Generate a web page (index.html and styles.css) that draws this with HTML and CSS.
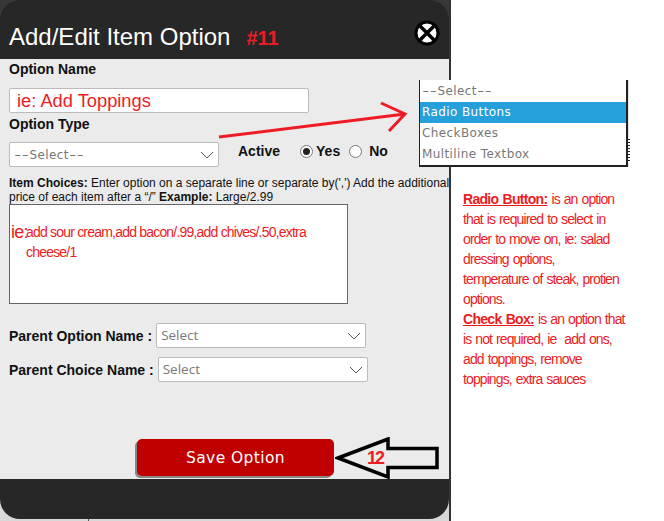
FILE: index.html
```html
<!DOCTYPE html>
<html>
<head>
  <title>Add/Edit Item Option</title>
  <link rel="stylesheet" href="styles.css">
</head>
<body>
  <div class="modal">
    <div class="modal-header">
      <h1>Add/Edit Item Option</h1>
      <span class="step-number">#11</span>
      <svg class="close-icon" width="28" height="28" viewBox="0 0 28 28">
        <circle cx="14" cy="14" r="11" fill="#fff" stroke="#000" stroke-width="3"/>
        <path d="M7 7L21 21M21 7L7 21" stroke="#000" stroke-width="3.5"/>
      </svg>
    </div>

    <div class="modal-body">
      <label class="field-label">Option Name</label>
      <div class="text-input">ie: Add Toppings</div>

      <label class="field-label type-label">Option Type</label>
      <div class="type-row">
        <div class="select-box type-select">
          <span><span class="dashes">--</span>Select<span class="dashes">--</span></span>
          <svg class="chevron" width="14" height="8" viewBox="0 0 14 8"><path d="M1 1L7 7L13 1" fill="none" stroke="#555" stroke-width="1"/></svg>
        </div>
        <div class="type-options">
          <span class="active-label">Active</span>
          <span class="radio checked"></span><span class="radio-text">Yes</span>
          <span class="radio"></span><span class="radio-text">No</span>
        </div>
      </div>

      <p class="choices-help"><b>Item Choices:</b> Enter option on a separate line or separate by(',') Add the additional<br>price of each item after a “/” <b>Example:</b> Large/2.99</p>
      <div class="choices-box">
        <span class="choices-hint">ie:</span>
        <span class="choices-text">add sour cream,add bacon/.99,add chives/.50,extra cheese/1</span>
      </div>

      <div class="parent-row first">
        <label class="parent-label">Parent Option Name :</label>
        <div class="select-box parent-select">
          <span>Select</span>
          <svg class="chevron" width="14" height="8" viewBox="0 0 14 8"><path d="M1 1L7 7L13 1" fill="none" stroke="#555" stroke-width="1"/></svg>
        </div>
      </div>
      <div class="parent-row">
        <label class="parent-label">Parent Choice Name :</label>
        <div class="select-box parent-select">
          <span>Select</span>
          <svg class="chevron" width="14" height="8" viewBox="0 0 14 8"><path d="M1 1L7 7L13 1" fill="none" stroke="#555" stroke-width="1"/></svg>
        </div>
      </div>

      <div class="button-row">
        <button class="save-btn">Save Option</button>
      </div>
    </div>

    <div class="modal-footer"></div>
    <div class="page-edge"></div>
  </div>

  <div class="dropdown-list">
    <div class="dropdown-item first"><span class="dashes">--</span>Select<span class="dashes">--</span></div>
    <div class="dropdown-item selected">Radio Buttons</div>
    <div class="dropdown-item">CheckBoxes</div>
    <div class="dropdown-item">Multiline Textbox</div>
  </div>

  <svg class="red-arrow" width="200" height="50" viewBox="0 0 200 50">
    <path d="M1 37L187 14M163 3L187 14L171 31" fill="none" stroke="#ed1c24" stroke-width="3"/>
  </svg>

  <svg class="black-arrow" width="106" height="42" viewBox="0 0 106 42">
    <path d="M3 21L53 2V11.5H102V30.5H53V40Z" fill="none" stroke="#000" stroke-width="3.5"/>
  </svg>
  <span class="arrow-number">12</span>

  <div class="notes">
    <p><b>Radio Button:</b> is an option<br>that is required to select in<br>order to move on, ie: salad<br>dressing options,<br>temperature of steak, protien<br>options.</p>
    <p><b>Check Box:</b> is an option that<br>is not required, ie&nbsp; add ons,<br>add toppings, remove<br>toppings, extra sauces</p>
  </div>
</body>
</html>
```

FILE: styles.css
```css
body {
  margin: 0;
  width: 664px;
  height: 521px;
  overflow: hidden;
  position: relative;
  background-color: #fff;
  font-family: "Liberation Sans", Arial, sans-serif;
}

.modal {
  width: 449px;
  height: 521px;
  display: flex;
  flex-direction: column;
  border-right: 2px solid #333;
  background: linear-gradient(#383838 0, #383838 60px, #d8d8d8 60px);
}

.modal-header {
  flex-shrink: 0;
  height: 59px;
  box-sizing: border-box;
  background-color: #272727;
  border-radius: 20px 20px 0 0;
  display: flex;
  align-items: baseline;
  padding: 22px 9px 0;
  position: relative;
}

.modal-header h1 {
  margin: 0;
  color: #fff;
  font-size: 24px;
  font-weight: normal;
  line-height: 30px;
}

.step-number {
  margin-left: 16px;
  color: #ed1c24;
  font-size: 20px;
  font-weight: bold;
}

.close-icon {
  position: absolute;
  left: 413px;
  top: 19px;
}

.modal-body {
  flex-shrink: 0;
  height: 420px;
  box-sizing: border-box;
  background-color: #ebebeb;
  padding: 2px 9px 0;
  display: flex;
  flex-direction: column;
}

.field-label {
  font-size: 14px;
  font-weight: bold;
  line-height: 16px;
  color: #111;
}

.text-input {
  width: 300px;
  height: 25px;
  box-sizing: border-box;
  margin-top: 11px;
  padding-left: 7px;
  background-color: #fff;
  border: 1px solid #bbb;
  border-radius: 2px;
  color: #ed1c24;
  font-size: 18.3px;
  line-height: 23px;
}

.type-label {
  margin-top: 3px;
}

.type-row {
  display: flex;
  align-items: center;
  margin-top: 10px;
  height: 25px;
}

.select-box {
  height: 25px;
  box-sizing: border-box;
  display: flex;
  align-items: center;
  justify-content: space-between;
  padding: 0 4px;
  background-color: #fff;
  border: 1px solid #bbb;
  border-radius: 2px;
  color: #777;
  font-family: "DejaVu Sans", sans-serif;
  font-size: 12px;
}

.type-select {
  width: 210px;
  letter-spacing: 0.4px;
}

.dashes {
  display: inline-block;
  transform: scaleX(1.6);
  margin: 0 3px;
}

.type-options {
  display: flex;
  align-items: center;
  margin-left: 19px;
  padding-bottom: 7px;
}

.active-label {
  font-size: 14px;
  font-weight: bold;
  color: #111;
}

.radio {
  width: 11px;
  height: 11px;
  border: 1px solid #777;
  border-radius: 50%;
  background-color: #fff;
  margin-left: 9px;
  margin-right: 7px;
  position: relative;
}

.radio.checked {
  margin-left: 20px;
  margin-right: 3px;
}

.radio.checked::after {
  content: "";
  position: absolute;
  left: 2px;
  top: 2px;
  width: 7px;
  height: 7px;
  border-radius: 50%;
  background-color: #222;
}

.radio-text {
  font-size: 14px;
  font-weight: bold;
  color: #111;
}

.choices-help {
  margin: 9px 0 0;
  font-size: 12px;
  line-height: 14px;
  color: #111;
  white-space: nowrap;
}

.choices-box {
  width: 339px;
  height: 100px;
  box-sizing: border-box;
  background-color: #fff;
  border: 1px solid #666;
  color: #ed1c24;
  position: relative;
  padding: 17px 30px 0 16px;
  font-size: 14px;
  line-height: 20px;
  letter-spacing: -0.8px;
}

.choices-hint {
  position: absolute;
  left: 1px;
  top: 16px;
  font-size: 18px;
  line-height: 22px;
}

.parent-row {
  display: flex;
  align-items: center;
  margin-top: 9px;
}

.parent-row.first {
  margin-top: 19px;
}

.parent-label {
  font-size: 14px;
  font-weight: bold;
  color: #111;
  margin-right: 4px;
}

.parent-select {
  width: 210px;
  font-family: "Open Sans", sans-serif;
  font-size: 13.5px;
}

.parent-select span {
  margin-bottom: 2px;
}

.button-row {
  margin-top: 57px;
  padding-left: 128px;
}

.save-btn {
  display: block;
  width: 197px;
  height: 37px;
  padding: 0;
  background-color: #c00000;
  color: #fff;
  border: none;
  border-radius: 5px;
  box-shadow: -2px 2px 0 #888;
  font-family: "DejaVu Sans", sans-serif;
  font-size: 15.5px;
  letter-spacing: 0.4px;
}

.modal-footer {
  flex-shrink: 0;
  height: 40px;
  background-color: #272727;
  border-radius: 0 0 20px 20px;
}

.page-edge {
  flex: 1;
  position: relative;
}

.page-edge::after {
  content: "";
  position: absolute;
  left: 88px;
  top: 0;
  width: 1px;
  height: 2px;
  background-color: #555;
}

/* annotations pasted over the screenshot */
.dropdown-list {
  position: absolute;
  left: 419px;
  top: 80px;
  width: 206px;
  background-color: #fff;
  border-right: 2px solid #222;
  border-bottom: 2px solid #222;
  border-left: 1px solid #222;
  box-shadow: 1px 0 0 #e6e6e6;
  font-family: "DejaVu Sans", sans-serif;
  font-size: 12px;
  color: #777;
  letter-spacing: 0.4px;
}

.dropdown-list::after {
  content: "";
  position: absolute;
  left: 100%;
  margin-left: 2px;
  top: 59px;
  width: 2px;
  height: 24px;
  background: repeating-linear-gradient(#222 0, #222 1px, #fff 1px, #fff 3px);
}

.dropdown-item {
  height: 21px;
  line-height: 21px;
  padding-left: 2px;
}

.dropdown-item.first {
  height: 22px;
  line-height: 22px;
}

.dropdown-item.selected {
  background-color: #26a0da;
  color: #fff;
}

.red-arrow {
  position: absolute;
  left: 218px;
  top: 100px;
}

.black-arrow {
  position: absolute;
  left: 335px;
  top: 437px;
}

.arrow-number {
  position: absolute;
  left: 367px;
  top: 448px;
  color: #ed1c24;
  font-size: 18px;
  font-weight: bold;
  letter-spacing: -2px;
}

.notes {
  position: absolute;
  left: 463px;
  top: 189px;
  width: 165px;
  color: #ed1c24;
  font-size: 14px;
  line-height: 20px;
  letter-spacing: -0.9px;
  word-spacing: 1px;
}

.notes p {
  margin: 0;
}

.notes b {
  letter-spacing: -0.7px;
  text-decoration: underline;
}
```
